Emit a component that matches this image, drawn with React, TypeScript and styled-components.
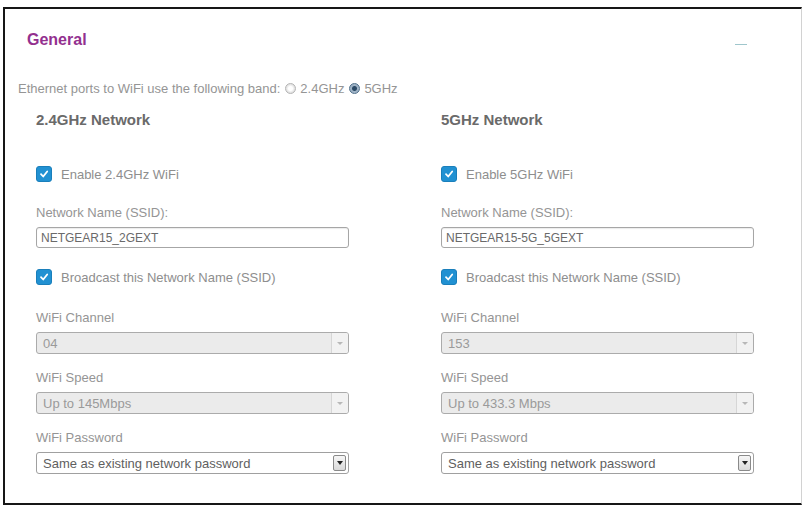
import React from "react";
import styled, { createGlobalStyle } from "styled-components";

const PURPLE = "#93308f";
const LABEL = "#959595";
const TEXT = "#6a6a6a";
const BLUE = "#2191d2";

const GlobalStyle = createGlobalStyle`
  html, body {
    margin: 0;
    padding: 0;
    background: #fff;
  }
  body {
    font-family: "Liberation Sans", Arial, sans-serif;
  }
`;

const Page = styled.div`
  width: 803px;
  height: 507px;
  box-sizing: border-box;
  padding: 7px 1px 2px 3px;
  background: #fff;
`;

const Panel = styled.div`
  height: 100%;
  box-sizing: border-box;
  border: 2px solid #161616;
  border-right: 1px solid #d2d2d2;
  padding: 21px 0 0 12px;
  display: flex;
  flex-direction: column;
`;

const HeaderRow = styled.div`
  display: flex;
  justify-content: space-between;
  align-items: center;
  padding-left: 10px;
  padding-right: 54px;
  height: 20px;
`;

const Title = styled.h2`
  margin: 0;
  font-size: 16px;
  line-height: 20px;
  font-weight: bold;
  color: ${PURPLE};
`;

const CollapseIcon = styled.span`
  display: block;
  width: 12px;
  height: 1px;
  background: #9fc6cc;
  margin-top: 8px;
`;

const BandRow = styled.div`
  margin-top: 30px;
  padding-left: 1px;
  display: flex;
  align-items: center;
  height: 16px;
  font-size: 13px;
  color: ${LABEL};
  white-space: nowrap;
`;

const Radio = styled.span<{ checked?: boolean }>`
  display: inline-block;
  box-sizing: border-box;
  width: 11px;
  height: 11px;
  border-radius: 50%;
  margin: 0 4px 0 5px;
  border: 1px solid ${(p) => (p.checked ? "#4f6f8a" : "#b4b4b4")};
  background: ${(p) =>
    p.checked
      ? "radial-gradient(circle, #2c4a66 0 2px, #9fb3c6 3px)"
      : "radial-gradient(circle, #fff 0 2px, #e4e4e4 4px)"};
`;

const Columns = styled.div`
  margin-top: 15px;
  padding-left: 19px;
  display: grid;
  grid-template-columns: 313px 313px;
  column-gap: 92px;
`;

const Column = styled.div`
  display: flex;
  flex-direction: column;
`;

const NetworkTitle = styled.h3`
  margin: 0;
  font-size: 15px;
  line-height: 18px;
  font-weight: bold;
  color: ${TEXT};
`;

const CheckRow = styled.label<{ gap: number }>`
  margin-top: ${(p) => p.gap}px;
  height: 20px;
  display: flex;
  align-items: center;
  font-size: 13px;
  color: #8e8e8e;
`;

const CheckBox = styled.span`
  width: 16px;
  height: 16px;
  box-sizing: border-box;
  border-radius: 3px;
  background: ${BLUE};
  border: 1px solid #1a7fbb;
  margin-right: 9px;
  display: flex;
  align-items: center;
  justify-content: center;
`;

const Field = styled.div<{ gap: number }>`
  margin-top: ${(p) => p.gap}px;
  display: flex;
  flex-direction: column;
  gap: 6px;
`;

const FieldLabel = styled.span`
  font-size: 13px;
  line-height: 16px;
  color: ${LABEL};
`;

const TextBox = styled.div`
  height: 21px;
  box-sizing: border-box;
  border: 1px solid #a6a6a6;
  border-radius: 3px;
  box-shadow: inset 0 1px 1px rgba(0, 0, 0, 0.08);
  padding: 0 4px;
  display: flex;
  align-items: center;
  font-size: 12px;
  color: ${TEXT};
`;

const SelectBox = styled.div<{ disabled?: boolean }>`
  height: 22px;
  box-sizing: border-box;
  border: 1px solid ${(p) => (p.disabled ? "#ababab" : "#a0a0a0")};
  border-radius: 3px;
  background: ${(p) => (p.disabled ? "#ebebeb" : "#fff")};
  display: flex;
  align-items: center;
  font-size: 13px;
  color: ${(p) => (p.disabled ? "#9a9a9a" : "#5f5f5f")};
`;

const SelectText = styled.span`
  flex: 1;
  padding-left: 6px;
`;

const DisabledArrow = styled.span`
  width: 17px;
  height: 100%;
  box-sizing: border-box;
  border-left: 1px solid #d6d6d6;
  background: #f2f2f2;
  border-radius: 0 2px 2px 0;
  display: flex;
  align-items: center;
  justify-content: center;

  &::after {
    content: "";
    border-left: 3px solid transparent;
    border-right: 3px solid transparent;
    border-top: 3px solid #b8b8b8;
  }
`;

const ArrowButton = styled.span`
  width: 13px;
  height: 16px;
  box-sizing: border-box;
  margin-right: 2px;
  border: 1px solid #8a8a8a;
  border-radius: 2px;
  background: linear-gradient(#f6f6f6, #d9d9d9);
  display: flex;
  align-items: center;
  justify-content: center;

  &::after {
    content: "";
    border-left: 3px solid transparent;
    border-right: 3px solid transparent;
    border-top: 4px solid #222;
  }
`;

const Tick = () => (
  <svg width="10" height="10" viewBox="0 0 10 10">
    <path
      d="M2 5.2 L4.2 7.5 L8.2 2.5"
      fill="none"
      stroke="#fff"
      strokeWidth="1.8"
      strokeLinecap="round"
      strokeLinejoin="round"
    />
  </svg>
);

type NetworkProps = {
  band: string;
  ssid: string;
  channel: string;
  speed: string;
};

const Select = ({ value, disabled }: { value: string; disabled?: boolean }) => (
  <SelectBox disabled={disabled}>
    <SelectText>{value}</SelectText>
    {disabled ? <DisabledArrow /> : <ArrowButton />}
  </SelectBox>
);

const NetworkColumn = ({ band, ssid, channel, speed }: NetworkProps) => (
  <Column>
    <NetworkTitle>{band} Network</NetworkTitle>
    <CheckRow gap={35}>
      <CheckBox>
        <Tick />
      </CheckBox>
      Enable {band} WiFi
    </CheckRow>
    <Field gap={21}>
      <FieldLabel>Network Name (SSID):</FieldLabel>
      <TextBox>{ssid}</TextBox>
    </Field>
    <CheckRow gap={19}>
      <CheckBox>
        <Tick />
      </CheckBox>
      Broadcast this Network Name (SSID)
    </CheckRow>
    <Field gap={23}>
      <FieldLabel>WiFi Channel</FieldLabel>
      <Select value={channel} disabled />
    </Field>
    <Field gap={16}>
      <FieldLabel>WiFi Speed</FieldLabel>
      <Select value={speed} disabled />
    </Field>
    <Field gap={16}>
      <FieldLabel>WiFi Password</FieldLabel>
      <Select value="Same as existing network password" />
    </Field>
  </Column>
);

const networks: NetworkProps[] = [
  { band: "2.4GHz", ssid: "NETGEAR15_2GEXT", channel: "04", speed: "Up to 145Mbps" },
  { band: "5GHz", ssid: "NETGEAR15-5G_5GEXT", channel: "153", speed: "Up to 433.3 Mbps" },
];

const App = () => (
  <>
    <GlobalStyle />
    <Page>
      <Panel>
        <HeaderRow>
          <Title>General</Title>
          <CollapseIcon />
        </HeaderRow>
        <BandRow>
          Ethernet ports to WiFi use the following band:
          <Radio />
          2.4GHz
          <Radio checked />
          5GHz
        </BandRow>
        <Columns>
          {networks.map((n) => (
            <NetworkColumn key={n.band} {...n} />
          ))}
        </Columns>
      </Panel>
    </Page>
  </>
);

export default App;
